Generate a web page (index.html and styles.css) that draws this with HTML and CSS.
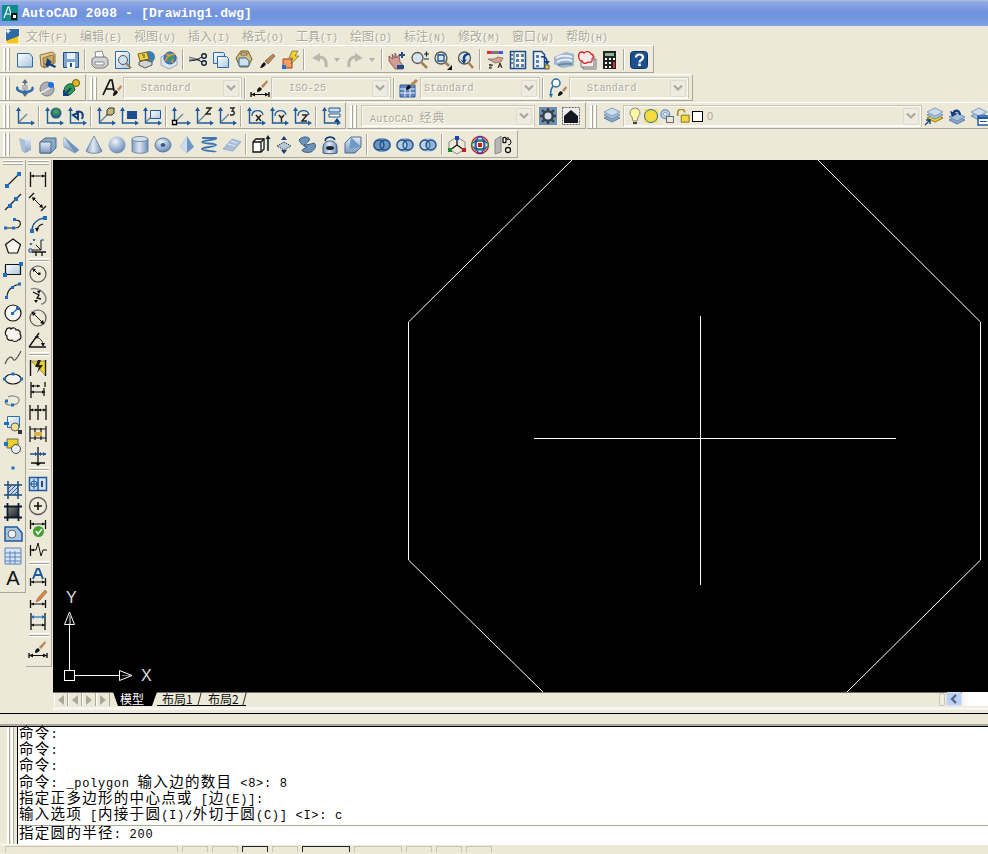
FILE: index.html
```html
<!DOCTYPE html>
<html lang="zh-CN">
<head>
<meta charset="utf-8">
<title>AutoCAD 2008 - [Drawing1.dwg]</title>
<link rel="stylesheet" href="styles.css">
</head>
<body>
<svg class="defs" aria-hidden="true">
<defs>
<linearGradient id="gp" x1="0" y1="0" x2="1" y2="1"><stop offset="0" stop-color="#fff"/><stop offset="1" stop-color="#a9c6dd"/></linearGradient>
<linearGradient id="gs" x1="0" y1="0" x2="1" y2="0"><stop offset="0" stop-color="#7e9cc0"/><stop offset=".45" stop-color="#dfe8f2"/><stop offset="1" stop-color="#6e8fb6"/></linearGradient>
<linearGradient id="gd" x1="0" y1="0" x2="0" y2="1"><stop offset="0" stop-color="#e4ecf5"/><stop offset="1" stop-color="#7d9bc0"/></linearGradient>
<radialGradient id="gb" cx=".4" cy=".3" r=".75"><stop offset="0" stop-color="#eef3f9"/><stop offset="1" stop-color="#5f83b0"/></radialGradient>
<radialGradient id="gg" cx=".5" cy=".4" r=".6"><stop offset="0" stop-color="#50b050"/><stop offset="1" stop-color="#104a90"/></radialGradient>
<linearGradient id="gk" x1="0" y1="0" x2="1" y2="1"><stop offset="0" stop-color="#8a8c70"/><stop offset="1" stop-color="#0e1a30"/></linearGradient>

<symbol id="new" viewBox="0 0 20 20"><path d="M2.500 3.500h12l3 3.500v10h-15z" fill="url(#gp)" stroke="#2b6ca6"/></symbol>
<symbol id="open" viewBox="0 0 20 20"><path d="M2 5l12-3 3 2v9l-11 5-3-2z" fill="#e4c98c" stroke="#8d7445"/><path d="M5 8l9-3 2 1-1 8-9 3z" fill="#c8a760" stroke="#8d7445"/><path d="M9 8l-1 6-2-1 4 5 1-3 6 3 1-2-6-3 2-1z" fill="#123f80"/></symbol>
<symbol id="save" viewBox="0 0 20 20"><path d="M2.500 2.500h15v15h-15z" fill="#7ea6cf" stroke="#1f4f8a"/><path d="M6 3h8v6H6z" fill="#e6eff7"/><path d="M6 12h8v6H6z" fill="#f4f4f4"/><path d="M9 13h2v4H9z" fill="#1f4f8a"/></symbol>
<symbol id="print" viewBox="0 0 20 20"><path d="M5 2l7-1 2 7H6z" fill="#fff" stroke="#888"/><path d="M2 9l3-2h11l2 3v5l-4 3H5l-3-3z" fill="#cfd2d8" stroke="#777"/><path d="M5 12h9v3H5z" fill="#fff" stroke="#888"/></symbol>
<symbol id="preview" viewBox="0 0 20 20"><path d="M2.500 1.500h12l2 2v15h-14z" fill="url(#gp)" stroke="#2b6ca6"/><circle cx="10" cy="10" r="4.500" fill="#cfe2ef" stroke="#555"/><path d="M13 13l5 5" stroke="#a08050" stroke-width="2"/></symbol>
<symbol id="publish" viewBox="0 0 20 20"><circle cx="13" cy="7" r="6" fill="#3d80b0"/><path d="M2 4l9-2 2 7-9 2z" fill="#f0d040" stroke="#7a6010"/><path d="M3 12l6-2 7 2v3l-7 3-6-3z" fill="#d4d4d4" stroke="#555"/><path d="M6 5h3M7 7h2" stroke="#444"/></symbol>
<symbol id="dwf" viewBox="0 0 20 20"><path d="M2 7l8-4 8 4v8l-8 4-8-4z" fill="#dde4ee" stroke="#9aa8bc"/><circle cx="11" cy="8" r="6" fill="#4a7fc0" stroke="#2a5a90"/><path d="M6 11c3-6 7-7 10-7M7 4c3 1 6 4 7 9" stroke="#e2a020" stroke-width="1.500" fill="none"/><path d="M9 7l4-1 1 3-4 2z" fill="#3aa040"/></symbol>
<symbol id="cut" viewBox="0 0 20 20"><path d="M1 7l11 3M1 9l11 1" stroke="#777" stroke-width="1.200" fill="none"/><circle cx="16" cy="6" r="2.300" fill="none" stroke="#123" stroke-width="1.400"/><circle cx="16" cy="13" r="2.300" fill="none" stroke="#123" stroke-width="1.400"/><path d="M14 7l-6 3-7 1M14 12l-6-3" stroke="#123" fill="none"/></symbol>
<symbol id="copy" viewBox="0 0 20 20"><path d="M2.500 2.500h10l1 1v10h-11z" fill="url(#gp)" stroke="#2b6ca6"/><path d="M6.500 6.500h9l2 2v9h-11z" fill="url(#gp)" stroke="#2b6ca6"/></symbol>
<symbol id="paste" viewBox="0 0 20 20"><path d="M2 8l5-7h7l4 8-4 8H6z" fill="#d8bd7c" stroke="#6f5a2c"/><path d="M5 8h7l3 3v5H5z" fill="#cfe0ee" stroke="#2b6ca6"/><path d="M7 3h6v2H7z" fill="#fff" stroke="#6f5a2c"/></symbol>
<symbol id="brush" viewBox="0 0 20 20"><path d="M3 18c1-3 3-5 4-6l2 2c-1 2-3 4-6 4z" fill="#111"/><path d="M8 11l8-7 2 2-7 8z" fill="#b98958" stroke="#6b4a28" stroke-width=".6"/></symbol>
<symbol id="match" viewBox="0 0 20 20"><path d="M3 9h9v9H3z" fill="#f0a060" stroke="#b03020"/><path d="M2 15h4v4H2z" fill="#2070d0"/><path d="M12 1l6 0-3 5h4l-8 8 2-6h-4z" fill="#f4d020" stroke="#555" stroke-width=".6"/></symbol>
<symbol id="undo" viewBox="0 0 20 20"><path d="M16 17c1-7-2-10-7-10" stroke="#bab8ac" stroke-width="3" fill="none"/><path d="M2 8l8-5v9z" fill="#bab8ac"/></symbol>
<symbol id="redo" viewBox="0 0 20 20"><path d="M4 17c-1-7 2-10 7-10" stroke="#bab8ac" stroke-width="3" fill="none"/><path d="M18 8l-8-5v9z" fill="#bab8ac"/></symbol>
<symbol id="pan" viewBox="0 0 20 20"><path d="M2 6l4 3-1-5 3 4 0-5 2 5 2-3 1 7 2 2 1 5H8l-6-8z" fill="#d49c92" stroke="#6a3a3a" stroke-width=".7"/><path d="M14 2h2v2h2v2h-2v2h-2V6h-2V4h2z" fill="#1f4f8a"/><path d="M10 15h7v4h-7z" fill="#1f4f8a"/></symbol>
<symbol id="zoomrt" viewBox="0 0 20 20"><circle cx="7.500" cy="8" r="5.500" fill="#d6e4ee" stroke="#555" stroke-width="1.300"/><path d="M11 12l6 6" stroke="#a88050" stroke-width="2.500"/><path d="M14 4h5M16.500 1.500v5M14 9h5" stroke="#123" stroke-width="1.200"/></symbol>
<symbol id="zoomwin" viewBox="0 0 20 20"><circle cx="8" cy="8" r="6" fill="#d6e4ee" stroke="#555" stroke-width="1.300"/><path d="M5 5h6v6H5z" fill="none" stroke="#1f4f8a" stroke-width="1.300"/><path d="M12 12l4 4" stroke="#a88050" stroke-width="2.500"/><path d="M19 15v5h-5z" fill="#111"/></symbol>
<symbol id="zoomprev" viewBox="0 0 20 20"><circle cx="8.500" cy="8" r="6" fill="#d6e4ee" stroke="#555" stroke-width="1.300"/><path d="M12 12l5 6" stroke="#a88050" stroke-width="2.500"/><path d="M13 3C8 3 6 6 7 11l-3-2 4 5 3-5-2 1c0-3 1-5 5-5z" fill="#123f80"/></symbol>
<symbol id="props" viewBox="0 0 20 20"><path d="M2 1h16v3H2z" fill="#d040c0"/><path d="M2 1h4v3H2z" fill="#e03030"/><path d="M9 1h3v3H9z" fill="#30b040"/><path d="M14 1h4v3h-4z" fill="#3060e0"/><path d="M3 9h6l4-2 5 1-2 4-6 1z" fill="#d8a090" stroke="#555" stroke-width=".6"/><path d="M4 15h4M4 15c2-1 4 1 0 3h3M13 18l2-5 2 5M14 16h2" stroke="#222" fill="none"/></symbol>
<symbol id="design" viewBox="0 0 20 20"><path d="M2.500 1.500h15v17h-15z" fill="#f4f4ee" stroke="#1f4f8a" stroke-width="1.500"/><path d="M6 1v18" stroke="#1f4f8a"/><path d="M3 4h2v2H3zM3 8h2v2H3zM3 12h2v2H3zM8 4h3v3H8zM13 4h3v3h-3zM8 9h3v3H8zM13 9h3v3h-3zM8 14h3v3H8zM13 14h3v3h-3z" fill="#5a80a8"/></symbol>
<symbol id="palette" viewBox="0 0 20 20"><path d="M2.500 1.500h8l3 3v14h-11z" fill="#eef2f6" stroke="#1f4f8a" stroke-width="1.500"/><path d="M5 5h3v3H5zM5 10h3v3H5zM5 15h3v2H5z" fill="#5a80a8"/><path d="M10 7c4-1 6 1 6 5" stroke="#123f80" stroke-width="1.500" fill="none"/><path d="M13 11h6l-3 4z" fill="#123f80"/><path d="M14 15h4v4h-4z" fill="#f0d040" stroke="#555"/></symbol>
<symbol id="sheet" viewBox="0 0 20 20"><path d="M0 7l12-5 8 2v12l-12 2-8-4z" fill="#9cb6cc"/><path d="M2 8c5-3 10-3 16-1M3 12c5-3 10-3 15-1" stroke="#eef" stroke-width="2" fill="none"/><path d="M4 15c4-1 8-2 14-1" stroke="#6d8aa6" stroke-width="2" fill="none"/></symbol>
<symbol id="markup" viewBox="0 0 20 20"><path d="M6 9h13v10H6z" fill="#ddd" stroke="#777"/><path d="M4 6h13v11H4z" fill="#eee" stroke="#777"/><path d="M2 4c1-3 4-2 5-1 2-2 6-2 7 1 3 0 3 4 1 5 1 3-2 4-4 3-2 2-5 2-6-1-3 0-4-4-3-7z" fill="#fbeaea" stroke="#d02020" stroke-width="1.300"/></symbol>
<symbol id="calc" viewBox="0 0 20 20"><path d="M3 1h13v18H3z" fill="#222"/><path d="M5 3h9v3H5z" fill="#8db48d"/><path d="M5 8h2v2H5zM9 8h2v2H9zM13 8h2v2h-2zM5 12h2v2H5zM9 12h2v2H9zM5 16h2v2H5zM9 16h2v2H9z" fill="#fff"/><path d="M13 12h2v6h-2z" fill="#e03030"/></symbol>
<symbol id="help" viewBox="0 0 20 20"><rect x="1.500" y="1.500" width="17" height="17" rx="3" fill="#1d508e" stroke="#0e3260"/><path d="M7 7.500c0-4 7-4 7 0 0 2.500-3.500 2.500-3.500 5" stroke="#fff" stroke-width="2.200" fill="none"/><path d="M9.200 13.500h2.600v2.600H9.200z" fill="#fff"/></symbol>

<symbol id="orbit1" viewBox="0 0 20 20"><path d="M10 2v16" stroke="#5a6a80" stroke-width="1.500"/><path d="M10 1l-3 4h6zM10 19l-3-4h6z" fill="#5a6a80"/><path d="M3 9c-3 3 2 5 7 5s9-2 7-5" fill="none" stroke="#2f6cb0" stroke-width="2.500"/><path d="M7 7h6v5H7z" fill="#b8b8b8"/></symbol>
<symbol id="orbit2" viewBox="0 0 20 20"><circle cx="9" cy="11" r="7" fill="#aeb0b4" stroke="#777"/><path d="M2 15C6 14 14 9 18 3" stroke="#eee" stroke-width="1.500" fill="none"/><circle cx="13" cy="7" r="3" fill="#1f70d8"/></symbol>
<symbol id="orbit3" viewBox="0 0 20 20"><path d="M3 14c0-7 4-9 9-8l2 6-5 5z" fill="#2f9a50" stroke="#14603a"/><circle cx="15" cy="5" r="3.500" fill="#e0b820" stroke="#6a5a10"/><path d="M10 10l-7 7M3 12v5h5" stroke="#123f80" stroke-width="2" fill="none"/></symbol>
<symbol id="textstyle" viewBox="0 0 20 20"><path d="M1 17L8 2h2l2 11M4 11h8" stroke="#111" stroke-width="1.700" fill="none"/><path d="M11 18c0-3 1-5 3-6l2 2c-1 2-3 4-5 4z" fill="#111"/><path d="M15 11l4-4 1 2-3 4z" fill="#b98958"/></symbol>
<symbol id="dimstyle" viewBox="0 0 20 20"><path d="M1 14v5M19 14v5" stroke="#111" stroke-width="1.400"/><path d="M1 16.500h18" stroke="#111"/><path d="M1 16.500l4-2v4zM19 16.500l-4-2v4z" fill="#111"/><path d="M7 14c0-3 1-4 3-5l2 2c-1 2-3 3-5 3z" fill="#111"/><path d="M11 8l6-6 1 2-5 6z" fill="#b98958"/></symbol>
<symbol id="tablestyle" viewBox="0 0 20 20"><path d="M1 7h15v12H1z" fill="#5f87c4" stroke="#2b5a9c"/><path d="M1 11h15M1 15h15M6 11v8M11 11v8" stroke="#e8eef8"/><path d="M7 12c0-3 1-4 3-5l2 2c-1 2-3 3-5 3z" fill="#111"/><path d="M11 6l6-5 2 2-5 5z" fill="#b98958"/></symbol>
<symbol id="mlstyle" viewBox="0 0 20 20"><circle cx="8" cy="5" r="4" fill="#fff" stroke="#2b6ca6" stroke-width="1.500"/><path d="M5 8c-2 3-3 6-2 10" stroke="#2b6ca6" stroke-width="1.500" fill="none"/><path d="M3 20l-2-4h4z" fill="#2b6ca6"/><path d="M10 18c0-3 1-4 3-5l2 2c-1 2-3 3-5 3z" fill="#111"/><path d="M14 12l4-4 1 2-3 4z" fill="#b98958"/></symbol>
<symbol id="gear" viewBox="0 0 20 20"><path d="M1 1h18v18H1z" fill="#6d90b4"/><path d="M10 2v16M2 10h16M4 4l12 12M16 4L4 16" stroke="#3a3f48" stroke-width="2.400"/><circle cx="10" cy="10" r="6" fill="#3a3f48"/><circle cx="10" cy="10" r="3.500" fill="#d5dfe8"/></symbol>
<symbol id="workspace" viewBox="0 0 20 20"><path d="M1.500 1.500h17v17h-17z" fill="#eee" stroke="#666" stroke-dasharray="2 1"/><path d="M3 10l7-6 7 6v7H3z" fill="#151520"/></symbol>
<symbol id="layers" viewBox="0 0 20 20"><path d="M2 12l8-4 8 4-8 4z" fill="#8aa8c8" stroke="#5f7fa6"/><path d="M2 9l8-4 8 4-8 4z" fill="#a9c0d8" stroke="#6f8fb6"/><path d="M2 6l8-4 8 4-8 4z" fill="#cfdcea" stroke="#7f9fc4"/></symbol>
<symbol id="layerm" viewBox="0 0 20 20"><path d="M3 12l8-4 8 4-8 4z" fill="#f0d020" stroke="#8a7a10"/><path d="M3 9l8-4 8 4-8 4z" fill="#a9c0d8" stroke="#6f8fb6"/><path d="M3 6l8-4 8 4-8 4z" fill="#cfdcea" stroke="#7f9fc4"/><path d="M1 19l5-5M2 14h4v4" stroke="#123f80" stroke-width="1.400" fill="none"/></symbol>
<symbol id="layerp" viewBox="0 0 20 20"><path d="M2 14l8-4 8 4-8 4z" fill="#8aa8c8" stroke="#5f7fa6"/><path d="M2 11l8-4 8 4-8 4z" fill="#a9c0d8" stroke="#6f8fb6"/><path d="M14 9c0-6-7-7-8-3l-3-1 2 6 5-3-2-1c1-2 4-1 4 2z" fill="#123f80"/></symbol>
<symbol id="layers3" viewBox="0 0 20 20"><path d="M1 10l8-4 8 4-8 4z" fill="#a9c0d8" stroke="#6f8fb6"/><path d="M1 6l8-4 8 4-8 4z" fill="#cfdcea" stroke="#7f9fc4"/><path d="M8 10h11v9H8z" fill="#fff" stroke="#1f5a9e" stroke-width="1.500"/><path d="M8 11h11v2H8zM10 15h7v1h-7z" fill="#1f5a9e"/></symbol>
<symbol id="bulb" viewBox="0 0 14 18"><path d="M7 1a5 5 0 0 0-3 9l1 4h4l1-4a5 5 0 0 0-3-9z" fill="#fff8a0" stroke="#888"/><path d="M5 15h4v2H5z" fill="#444"/></symbol>
<symbol id="sun" viewBox="0 0 14 14"><path d="M0 0h14v14H0z" fill="#f2e36a"/><circle cx="7" cy="7" r="6.500" fill="#f5dc3a" stroke="#2f6cb0"/></symbol>
<symbol id="freeze" viewBox="0 0 16 16"><circle cx="6" cy="6" r="5" fill="#c4d4e8" stroke="#6e8fb6" stroke-width="1.500"/><circle cx="6" cy="6" r="2" fill="#fff" stroke="#6e8fb6"/><path d="M7.500 8.500h8v7h-8z" fill="#ece9d8" stroke="#456"/></symbol>
<symbol id="lock" viewBox="0 0 16 16"><path d="M2 8V4a4 4 0 0 1 8 0" fill="none" stroke="#b09020" stroke-width="2"/><path d="M6 7h9v8H6z" fill="#f2d840" stroke="#806a10"/></symbol>

<symbol id="axes" viewBox="0 0 20 20"><path d="M3.500 4v13H17" stroke="#1d5a9e" stroke-width="1.400" fill="none"/><path d="M3.500 1l-2.500 4h5zM20 17l-4-2.500v5z" fill="#1d5a9e"/></symbol>
<symbol id="ucs" viewBox="0 0 20 20"><use href="#axes" width="20" height="20"/><path d="M4 16L12 8" stroke="#6d7f90" stroke-width="1.200"/></symbol>
<symbol id="u-world" viewBox="0 0 20 20"><use href="#axes" width="20" height="20"/><circle cx="12" cy="7" r="5.500" fill="url(#gg)"/></symbol>
<symbol id="u-prev" viewBox="0 0 20 20"><use href="#axes" width="20" height="20"/><path d="M9 6c6-2 8 2 6 7M6 9l5-2v6z" fill="none" stroke="#123f80" stroke-width="2"/></symbol>
<symbol id="u-face" viewBox="0 0 20 20"><use href="#ucs" width="20" height="20"/><path d="M11 4l2-2h5v5l-2 2h-5z" fill="#c8b878" stroke="#333"/></symbol>
<symbol id="u-obj" viewBox="0 0 20 20"><use href="#axes" width="20" height="20"/><path d="M8 5h10v8H8z" fill="#1d4f8e"/></symbol>
<symbol id="u-view" viewBox="0 0 20 20"><use href="#ucs" width="20" height="20"/><path d="M8.500 4.500h10v8h-10z" fill="url(#gp)" stroke="#1d5a9e"/></symbol>
<symbol id="u-origin" viewBox="0 0 20 20"><use href="#ucs" width="20" height="20"/><path d="M1.500 14.500h4v4h-4z" fill="#fff" stroke="#000" stroke-width="1.300"/></symbol>
<symbol id="u-z" viewBox="0 0 20 20"><use href="#ucs" width="20" height="20"/><path d="M12 2h5l-5 6h5" stroke="#222" stroke-width="1.400" fill="none"/></symbol>
<symbol id="u-3" viewBox="0 0 20 20"><use href="#ucs" width="20" height="20"/><path d="M13 2h4l-2 3c3 0 3 4 0 4h-2" stroke="#222" stroke-width="1.300" fill="none"/></symbol>
<symbol id="u-x" viewBox="0 0 20 20"><use href="#axes" width="20" height="20"/><path d="M6 10c0-7 10-7 11-1" stroke="#1d5a9e" stroke-width="1.300" fill="none"/><path d="M10 9l5 6M15 9l-5 6" stroke="#222" stroke-width="1.500"/></symbol>
<symbol id="u-y" viewBox="0 0 20 20"><use href="#axes" width="20" height="20"/><path d="M6 10c0-7 10-7 11-1" stroke="#1d5a9e" stroke-width="1.300" fill="none"/><path d="M10 9l2.500 3 2.500-3M12.500 12v4" stroke="#222" stroke-width="1.500" fill="none"/></symbol>
<symbol id="u-zz" viewBox="0 0 20 20"><use href="#axes" width="20" height="20"/><path d="M6 10c0-7 10-7 11-1" stroke="#1d5a9e" stroke-width="1.300" fill="none"/><path d="M10 9h5l-5 6h5" stroke="#222" stroke-width="1.500" fill="none"/></symbol>
<symbol id="u-mgr" viewBox="0 0 20 20"><use href="#axes" width="20" height="20"/><path d="M8 2h11v4H8z" fill="#cfdcea" stroke="#1d5a9e"/><path d="M8 8h11v3H8z" fill="#fff" stroke="#1d5a9e"/><path d="M13 16l3-4 3 4z" fill="#123f80"/></symbol>

<symbol id="s-poly" viewBox="0 0 20 20"><path d="M4 3l6 1 6-1v12l-6 3-3-2z" fill="url(#gd)"/><path d="M4 3l6 2v13l-3-2z" fill="#a9c0d8"/></symbol>
<symbol id="s-box" viewBox="0 0 20 20"><path d="M2 7l5-4h11v10l-5 5H2z" fill="#8aa8c8" stroke="#4f6d90"/><path d="M2 7h11v11H2z" fill="url(#gd)" stroke="#4f6d90"/></symbol>
<symbol id="s-wedge" viewBox="0 0 20 20"><path d="M3 2l15 13-4 3-11-6z" fill="#6e8fb6" stroke="#8ea5bf"/><path d="M3 2v10l11 6z" fill="url(#gd)"/></symbol>
<symbol id="s-cone" viewBox="0 0 20 20"><path d="M10 1l8 15c-3 3-13 3-16 0z" fill="url(#gs)" stroke="#5a7aa0" stroke-width=".8"/></symbol>
<symbol id="s-sphere" viewBox="0 0 20 20"><circle cx="10" cy="10" r="8.500" fill="url(#gb)"/></symbol>
<symbol id="s-cyl" viewBox="0 0 20 20"><path d="M2 4v12c0 3 16 3 16 0V4z" fill="url(#gs)" stroke="#5a7aa0" stroke-width=".8"/><ellipse cx="10" cy="4" rx="8" ry="2.500" fill="#d5e0ec" stroke="#5a7aa0" stroke-width=".8"/></symbol>
<symbol id="s-torus" viewBox="0 0 20 20"><ellipse cx="10" cy="10" rx="8" ry="7" fill="url(#gb)" stroke="#5a7aa0"/><ellipse cx="10" cy="10" rx="2.500" ry="2" fill="#3a5c86"/></symbol>
<symbol id="s-pyr" viewBox="0 0 20 20"><path d="M11 1l7 11-7 6-7-6z" fill="#6e9ac8"/><path d="M11 1v17l-7-6z" fill="#cddcec"/></symbol>
<symbol id="s-helix" viewBox="0 0 20 20"><path d="M3 3h14c2 2-14 2-14 4s14 1 14 3-14 2-14 4 14 2 14 3" stroke="#3d78b0" stroke-width="1.800" fill="none"/></symbol>
<symbol id="s-plane" viewBox="0 0 20 20"><path d="M1 14l9-10 9 3-8 9z" fill="#a9c0d8" stroke="#9ab0c6"/><path d="M6 9l7 2M9 6l6 2" stroke="#e8eef6"/></symbol>
<symbol id="s-extr" viewBox="0 0 20 20"><path d="M2 7l3-3h8v10l-3 3H2z" fill="#fff" stroke="#111" stroke-width="1.300"/><path d="M2 7h8v10M10 7l3-3" fill="none" stroke="#111" stroke-width="1.300"/><path d="M17 2v14" stroke="#123" stroke-width="1.600"/><path d="M17 0l-2.500 4h5z" fill="#123"/></symbol>
<symbol id="s-press" viewBox="0 0 20 20"><path d="M10 1l-3 4h6zM10 19l-3-4h6z" fill="#1d3f70"/><path d="M3 11l7-4 7 4-7 4z" fill="#b8c8dc" stroke="#334" stroke-dasharray="1.500 1"/></symbol>
<symbol id="s-sweep" viewBox="0 0 20 20"><path d="M2 5c2-3 7-4 10-2 2 2-2 5-5 7 3 0 7-1 10-2 3 2 1 7-3 9-4 1-9 0-9-2l5-3c-3 0-6-3-8-7z" fill="#6d93ba" stroke="#3a5a82"/></symbol>
<symbol id="s-rev" viewBox="0 0 20 20"><path d="M3 13c0-5 3-7 7-7s7 2 7 7v5c-3 1-11 1-14 0z" fill="url(#gs)" stroke="#3a5a82"/><ellipse cx="10" cy="13" rx="4" ry="2" fill="#223"/><path d="M5 6C6 1 13 1 15 5" fill="none" stroke="#123f80" stroke-width="1.600"/></symbol>
<symbol id="s-loft" viewBox="0 0 20 20"><path d="M2 8l6-6h10v10l-6 6H2z" fill="url(#gd)" stroke="#4f6d90"/><path d="M8 2l-2 12 12-2z" fill="#6e9ac8"/></symbol>
<symbol id="s-union" viewBox="0 0 20 20"><ellipse cx="10" cy="10" rx="9" ry="7" fill="#6e97c0"/><circle cx="7" cy="10" r="5" fill="none" stroke="#1d4f8e" stroke-width="1.300"/><circle cx="13" cy="10" r="5" fill="none" stroke="#1d4f8e" stroke-width="1.300"/></symbol>
<symbol id="s-sub" viewBox="0 0 20 20"><ellipse cx="10" cy="10" rx="9" ry="7" fill="#8bb0d0"/><circle cx="7" cy="10" r="5" fill="#b6cde0" stroke="#1d4f8e" stroke-width="1.300"/><circle cx="13" cy="10" r="5" fill="none" stroke="#1d4f8e" stroke-width="1.300"/></symbol>
<symbol id="s-int" viewBox="0 0 20 20"><ellipse cx="10" cy="10" rx="9" ry="7" fill="#bcd0e2"/><circle cx="7" cy="10" r="5" fill="none" stroke="#1d4f8e" stroke-width="1.300"/><circle cx="13" cy="10" r="5" fill="#6e97c0" fill-opacity=".5" stroke="#1d4f8e" stroke-width="1.300"/></symbol>
<symbol id="g-move" viewBox="0 0 20 20"><path d="M10 2l8 5v7l-8 5-8-5V7z" fill="none" stroke="#888"/><path d="M10 2v8M10 10l-7 5M10 10l7 5" stroke="#111" stroke-width="1.300"/><path d="M8 1h4v4H8z" fill="#1f40c0"/><path d="M1 13h4v4H1z" fill="#1a8a30"/><path d="M15 13h4v4h-4z" fill="#c02020"/></symbol>
<symbol id="g-rot" viewBox="0 0 20 20"><circle cx="10" cy="10" r="8.500" fill="none" stroke="#c02020" stroke-width="1.300"/><ellipse cx="10" cy="10" rx="8.500" ry="4" fill="none" stroke="#1a8a30" stroke-width="1.300"/><ellipse cx="10" cy="10" rx="4" ry="8.500" fill="none" stroke="#1f40c0" stroke-width="1.300"/><path d="M5 5h10v10H5z" fill="none" stroke="#1f40c0"/><path d="M8 8h4v4H8z" fill="#c02020"/></symbol>
<symbol id="g-ax" viewBox="0 0 20 20"><path d="M2 5l6-4v16l-6 2z" fill="#b8b8b8" stroke="#888"/><path d="M10 8V3a2 2 0 0 1 3 0v4a2 2 0 0 1-3 0z" fill="#fff" stroke="#111" stroke-width="1.300"/><circle cx="15" cy="15" r="2.500" fill="#fff" stroke="#111" stroke-width="1.300"/><path d="M15 4a3 3 0 0 1 0 6M13 3l2 2V2" fill="none" stroke="#111"/></symbol>

<symbol id="l-line" viewBox="0 0 20 20"><path d="M4 16L16 4" stroke="#222" stroke-width="1.200"/><path d="M2 14h4v4H2zM14 2h4v4h-4z" fill="#1f6fc0"/></symbol>
<symbol id="l-xline" viewBox="0 0 20 20"><path d="M2 18L18 2" stroke="#222" stroke-width="1.200"/><path d="M5 12h4v4H5zM11 5h4v4h-4z" fill="#1f6fc0"/></symbol>
<symbol id="l-pline" viewBox="0 0 20 20"><path d="M3 14h9c5 0 6-4 5-6s-4-2-5-2" fill="none" stroke="#222" stroke-width="1.200"/><path d="M1 12.500h3v3H1zM9 12.500h3v3H9zM10 4h3v3h-3z" fill="#1f6fc0"/></symbol>
<symbol id="l-poly" viewBox="0 0 20 20"><path d="M10 3l7.500 5.500-3 8.500h-9l-3-8.500z" fill="#fff" fill-opacity=".5" stroke="#111" stroke-width="1.200"/></symbol>
<symbol id="l-rect" viewBox="0 0 20 20"><path d="M2.500 5.500h15v10h-15z" fill="url(#gp)" stroke="#111" stroke-width="1.200"/><path d="M16 3h4v4h-4zM0 14h4v4H0z" fill="#1f6fc0"/></symbol>
<symbol id="l-arc" viewBox="0 0 20 20"><path d="M4 16C4 9 10 4 17 3" fill="none" stroke="#222" stroke-width="1.200"/><path d="M2 15h3v3H2zM8 5h3v3H8zM15 1.500h3v3h-3z" fill="#1f6fc0"/></symbol>
<symbol id="l-circle" viewBox="0 0 20 20"><circle cx="10" cy="10" r="8" fill="#fff" fill-opacity=".6" stroke="#111" stroke-width="1.200"/><path d="M10 10l4-4" stroke="#1f6fc0" stroke-width="1.200"/><path d="M8 9h3v3H8zM13 4h3v3h-3z" fill="#1f6fc0"/></symbol>
<symbol id="l-cloud" viewBox="0 0 20 20"><path d="M3 6c0-3 4-4 5-2 2-2 5-1 5 1 3-1 5 2 4 4 2 2 1 6-2 6-1 2-5 2-6 0-3 1-6-1-5-4-2-1-2-4-1-5z" fill="#fff" fill-opacity=".5" stroke="#111" stroke-width="1.200"/></symbol>
<symbol id="l-spline" viewBox="0 0 20 20"><path d="M2 17C5 9 9 9 10 12s4 0 8-8" fill="none" stroke="#555" stroke-width="1.200"/></symbol>
<symbol id="l-ell" viewBox="0 0 20 20"><ellipse cx="10" cy="10" rx="8" ry="5" fill="#fff" fill-opacity=".5" stroke="#111" stroke-width="1.200"/><path d="M0 8.500h3v3H0zM17 8.500h3v3h-3zM8.500 3.500h3v3h-3z" fill="#1f6fc0"/></symbol>
<symbol id="l-ellarc" viewBox="0 0 20 20"><path d="M5 6c4-2 11-1 11 3s-4 5-8 5-6-1-6-4" fill="none" stroke="#888" stroke-width="1.200"/><path d="M2 8.500h3v3H2zM8 12.500h3v3H8z" fill="#1f6fc0"/></symbol>
<symbol id="l-insert" viewBox="0 0 20 20"><path d="M4.500 2.500h12v11h-12z" fill="url(#gp)" stroke="#2b6ca6"/><circle cx="12" cy="13" r="4" fill="#f0e090" stroke="#666"/><path d="M1 8h5v3H1z" fill="#1f6fc0"/><path d="M15 16h4v4h-4z" fill="#333"/></symbol>
<symbol id="l-block" viewBox="0 0 20 20"><path d="M4 3h11v9H4z" fill="#f0d020" stroke="#666"/><circle cx="13" cy="13" r="4.500" fill="#e8eef6" stroke="#444"/><path d="M1 6h4v4H1z" fill="#1f6fc0"/></symbol>
<symbol id="l-point" viewBox="0 0 20 20"><path d="M8.500 8.500h3v3h-3z" fill="#1f6fc0"/></symbol>
<symbol id="l-hatch" viewBox="0 0 20 20"><path d="M5 5h10v10H5z" fill="#ccd4e0"/><path d="M5 9l4-4M5 13l8-8M7 15l8-8M11 15l4-4" stroke="#1f5a9e"/><path d="M1 5h18M1 15h18M5 1v18M15 1v18" stroke="#1d4a80" stroke-width="1.500"/></symbol>
<symbol id="l-grad" viewBox="0 0 20 20"><path d="M4 4h12v12H4z" fill="url(#gk)"/><path d="M1 4.500h18M1 15.500h18M4.500 1v18M15.500 1v18" stroke="#0e1a30" stroke-width="1.800"/></symbol>
<symbol id="l-region" viewBox="0 0 20 20"><path d="M2 3h12l5 6v8H2z" fill="#a9c6e0" stroke="#1f5a9e" stroke-width="1.500"/><circle cx="9" cy="10" r="4" fill="#e8eef6" stroke="#666"/></symbol>
<symbol id="l-table" viewBox="0 0 20 20"><path d="M2 2h16v3H2z" fill="#6d8fc0"/><path d="M2 2h16v16H2z" fill="#d8e4f4" stroke="#5f82b8"/><path d="M2 7h16M2 11h16M2 15h16M7 5v13M12 5v13" stroke="#5f82b8"/></symbol>

<symbol id="d-lin" viewBox="0 0 20 20"><path d="M2.500 2v15M17.500 2v15" stroke="#111" stroke-width="1.300"/><path d="M3 6h14" stroke="#111"/><path d="M3 6l3-1.500v3zM17 6l-3-1.500v3z" fill="#111"/></symbol>
<symbol id="d-ali" viewBox="0 0 20 20"><path d="M1 6l5-5M13 19l5-5" stroke="#111" stroke-width="1.300"/><path d="M5 6l9 9" stroke="#111"/><path d="M4 5l1 4 3-3zM15 16l-1-4-3 3z" fill="#111"/></symbol>
<symbol id="d-arc" viewBox="0 0 20 20"><path d="M4 16C4 10 9 5 16 4" fill="none" stroke="#1d4f8e" stroke-width="1.300"/><path d="M2 15h4v4H2zM15 2h4v4h-4z" fill="#1f6fc0"/><path d="M9 17c0-4 2-6 6-7" fill="none" stroke="#111" stroke-width="1.200"/><path d="M9 18l-2-4h4z" fill="#111"/></symbol>
<symbol id="d-ord" viewBox="0 0 20 20"><path d="M8 8l5 5V3M13 13H4" fill="none" stroke="#111"/><path d="M4 15h14M8 15v4M14 15v4" stroke="#111" stroke-width="1.300"/><path d="M13 3h3M5 2l1 2 1-2M2 6l1 2 1-2M1 12h3v3H1z" fill="none" stroke="#1d4f8e"/></symbol>
<symbol id="d-rad" viewBox="0 0 20 20"><circle cx="10" cy="10" r="8" fill="none" stroke="#555" stroke-width="1.200"/><path d="M10 10L5 5" stroke="#111"/><path d="M4 4l1.500 4 2.500-2.500z" fill="#111"/><path d="M10 8.500h2.500V11H10z" fill="#111"/></symbol>
<symbol id="d-jog" viewBox="0 0 20 20"><path d="M3 3c8-2 15 4 15 11-1 3-3 4-5 4" fill="none" stroke="#888" stroke-width="1.500"/><path d="M5 6l6 3-2 3 4 1" fill="none" stroke="#111" stroke-width="1.300"/><path d="M13 4l-4 1 2 3zM8 17l-2-3 4 0z" fill="#111"/></symbol>
<symbol id="d-dia" viewBox="0 0 20 20"><circle cx="10" cy="10" r="8" fill="none" stroke="#555" stroke-width="1.200"/><path d="M5 5l10 10" stroke="#111"/><path d="M3.500 3.500l1.500 4.500 3-3zM16.500 16.500l-1.500-4.500-3 3z" fill="#111"/></symbol>
<symbol id="d-ang" viewBox="0 0 20 20"><path d="M1 17h17M1 17L11 3" fill="none" stroke="#111" stroke-width="1.300"/><path d="M8 7c4 1 7 4 7 8" fill="none" stroke="#333"/><path d="M15 17l-2-4h4zM7 6l4 0-2 3z" fill="#111"/></symbol>
<symbol id="d-quick" viewBox="0 0 20 20"><path d="M2.500 2v16M17.500 2v16" stroke="#111" stroke-width="1.400"/><path d="M3 3l14 14V3z" fill="#f0d020" stroke="#665" stroke-width=".6"/><path d="M10 2l-3 7h4l-2 6 6-8h-4l2-5z" fill="#222"/></symbol>
<symbol id="d-base" viewBox="0 0 20 20"><path d="M3 2v16M16 8v8M17 2v5" stroke="#111" stroke-width="1.300"/><path d="M3 6h9M3 12h14" stroke="#111"/><path d="M3 6l3-1.500v3zM12 6l-3-1.500v3zM3 12l3-1.500v3zM17 12l-3-1.500v3z" fill="#111"/></symbol>
<symbol id="d-cont" viewBox="0 0 20 20"><path d="M2 3v15M10 3v15M18 3v15" stroke="#111" stroke-width="1.300"/><path d="M2 8h16" stroke="#111"/><path d="M2 8l3-1.500v3zM10 8l-3-1.500v3zM10 8l3-1.500v3zM18 8l-3-1.500v3z" fill="#111"/></symbol>
<symbol id="d-space" viewBox="0 0 20 20"><path d="M2 2v16M18 2v16M7 4v12M13 4v12" stroke="#111" stroke-width="1.200"/><path d="M2 5h16M2 14h16" stroke="#111"/><path d="M6 8h8v4H6z" fill="#d8b040"/></symbol>
<symbol id="d-break" viewBox="0 0 20 20"><path d="M10 1v16M3 17h14" stroke="#111" stroke-width="1.300"/><path d="M2 8h5M13 8h5" stroke="#1d4f8e" stroke-width="1.300"/><path d="M10 8l-3-2v4zM10 8l3-2v4zM18 8l-3-2v4z" fill="#1d4f8e"/><path d="M7 17l3 3 3-3z" fill="#111"/></symbol>
<symbol id="d-tol" viewBox="0 0 20 20"><path d="M1.500 3.500h17v13h-17z" fill="#cfe0f0" stroke="#1d5a9e" stroke-width="1.500"/><path d="M10 4v12" stroke="#1d5a9e" stroke-width="1.500"/><circle cx="6" cy="10" r="3" fill="none" stroke="#1d5a9e"/><path d="M6 5v10M1 10h9" stroke="#1d5a9e"/><path d="M14 7v6" stroke="#123" stroke-width="1.600"/></symbol>
<symbol id="d-cen" viewBox="0 0 20 20"><circle cx="10" cy="10" r="8.500" fill="none" stroke="#555" stroke-width="1.300"/><path d="M6 10h8M10 6v8" stroke="#111" stroke-width="1.600"/></symbol>
<symbol id="d-insp" viewBox="0 0 20 20"><path d="M2.500 2v9M17.500 2v9" stroke="#111" stroke-width="1.300"/><path d="M3 6h14" stroke="#111"/><path d="M3 6l3-1.500v3zM17 6l-3-1.500v3z" fill="#111"/><circle cx="10.500" cy="13.500" r="5.500" fill="#40a030"/><path d="M8 13l2 3 4-5" stroke="#fff" stroke-width="1.600" fill="none"/></symbol>
<symbol id="d-jogl" viewBox="0 0 20 20"><path d="M2.500 5v11" stroke="#111" stroke-width="1.300"/><path d="M3 10h5l2-7 3 13 2-6h4" stroke="#111" fill="none"/><path d="M3 10l3-1.500v3z" fill="#111"/></symbol>
<symbol id="d-ted" viewBox="0 0 20 20"><path d="M2.500 11v8M17.500 11v8" stroke="#111" stroke-width="1.300"/><path d="M3 15h14" stroke="#111"/><path d="M3 15l3-1.500v3zM17 15l-3-1.500v3z" fill="#111"/><path d="M5 12L9 2h2l4 10M7 8h6" fill="none" stroke="#1d5a9e" stroke-width="2"/></symbol>
<symbol id="d-ed" viewBox="0 0 20 20"><path d="M2.500 11v8M17.500 11v8" stroke="#111" stroke-width="1.300"/><path d="M3 15h14" stroke="#111"/><path d="M3 15l3-1.500v3zM17 15l-3-1.500v3z" fill="#111"/><path d="M8 13l2-4 7-8 2 2-7 8z" fill="#d89040" stroke="#844" stroke-width=".6"/></symbol>
<symbol id="d-upd" viewBox="0 0 20 20"><path d="M3 1v17M17 1v17" stroke="#111" stroke-width="1.300"/><path d="M3 5h14" stroke="#1f6fc0" stroke-width="1.200"/><path d="M3 5l3-2v4zM17 5l-3-2v4z" fill="#1f6fc0"/><path d="M3 13h14" stroke="#111"/><path d="M3 13l3-1.500v3zM17 13l-3-1.500v3z" fill="#111"/></symbol>
<symbol id="chev" viewBox="0 0 12 8"><path d="M2 1.500l4 4 4-4" fill="none" stroke="#aca899" stroke-width="2.200"/></symbol>
</defs>
</svg>

<header class="title">
  <svg class="appicon" viewBox="0 0 16 16"><path d="M0 0h16v16H0z" fill="#0f8a8a"/><path d="M2 13L6 2h1l3 11M4 9h5" fill="none" stroke="#fff" stroke-width="1.200"/><path d="M9 8h6v7H9z" fill="#111"/><path d="M11 10h3v3h-3z" fill="#fff"/></svg>
  <span class="title-text">AutoCAD 2008 - [Drawing1.dwg]</span>
</header>

<nav class="menubar">
  <svg class="docicon" viewBox="0 0 15 18"><path d="M1 2h13v15H1z" fill="#f5c518" stroke="#fff"/><path d="M1 2h13v7L1 14z" fill="#2f6aa8"/><path d="M3 1l1 2 2 1-2 1-1 2-1-2-2-1 2-1z" fill="#fff"/></svg>
  <span class="menu-item">文件<span class="key">(F)</span></span>
  <span class="menu-item">编辑<span class="key">(E)</span></span>
  <span class="menu-item">视图<span class="key">(V)</span></span>
  <span class="menu-item">插入<span class="key">(I)</span></span>
  <span class="menu-item">格式<span class="key">(O)</span></span>
  <span class="menu-item">工具<span class="key">(T)</span></span>
  <span class="menu-item">绘图<span class="key">(D)</span></span>
  <span class="menu-item">标注<span class="key">(N)</span></span>
  <span class="menu-item">修改<span class="key">(M)</span></span>
  <span class="menu-item">窗口<span class="key">(W)</span></span>
  <span class="menu-item">帮助<span class="key">(H)</span></span>
</nav>

<section class="row row-tall">
  <div class="bar">
    <i class="grip"></i>
    <span class="btn"><svg class="ic"><use href="#new"/></svg></span><span class="btn"><svg class="ic"><use href="#open"/></svg></span><span class="btn"><svg class="ic"><use href="#save"/></svg></span>
    <i class="sep"></i>
    <span class="btn"><svg class="ic"><use href="#print"/></svg></span><span class="btn"><svg class="ic"><use href="#preview"/></svg></span><span class="btn"><svg class="ic"><use href="#publish"/></svg></span><span class="btn"><svg class="ic"><use href="#dwf"/></svg></span>
    <i class="sep"></i>
    <span class="btn"><svg class="ic"><use href="#cut"/></svg></span><span class="btn"><svg class="ic"><use href="#copy"/></svg></span><span class="btn"><svg class="ic"><use href="#paste"/></svg></span><span class="btn"><svg class="ic"><use href="#brush"/></svg></span><span class="btn"><svg class="ic"><use href="#match"/></svg></span>
    <i class="sep"></i>
    <span class="split"><svg class="ic"><use href="#undo"/></svg><i class="caret"></i></span><span class="split split-redo"><svg class="ic"><use href="#redo"/></svg><i class="caret"></i></span>
    <i class="sep"></i>
    <span class="btn"><svg class="ic"><use href="#pan"/></svg></span><span class="btn"><svg class="ic"><use href="#zoomrt"/></svg></span><span class="btn"><svg class="ic"><use href="#zoomwin"/></svg></span><span class="btn"><svg class="ic"><use href="#zoomprev"/></svg></span>
    <i class="sep"></i>
    <span class="btn"><svg class="ic"><use href="#props"/></svg></span><span class="btn"><svg class="ic"><use href="#design"/></svg></span><span class="btn"><svg class="ic"><use href="#palette"/></svg></span><span class="btn"><svg class="ic"><use href="#sheet"/></svg></span><span class="btn"><svg class="ic"><use href="#markup"/></svg></span><span class="btn"><svg class="ic"><use href="#calc"/></svg></span>
    <i class="sep"></i>
    <span class="btn"><svg class="ic"><use href="#help"/></svg></span>
  </div>
</section>

<section class="row">
  <div class="bar">
    <i class="grip"></i>
    <span class="btn"><svg class="ic"><use href="#orbit1"/></svg></span><span class="btn"><svg class="ic"><use href="#orbit2"/></svg></span><span class="btn"><svg class="ic"><use href="#orbit3"/></svg></span>
  </div>
  <div class="bar">
    <i class="grip"></i>
    <span class="btn"><svg class="ic"><use href="#textstyle"/></svg></span>
    <div class="combo w119"><span class="combo-text">Standard</span><span class="drop"><svg class="chev"><use href="#chev"/></svg></span></div>
    <i class="sep"></i>
    <span class="btn"><svg class="ic"><use href="#dimstyle"/></svg></span>
    <div class="combo w120"><span class="combo-text">ISO-25</span><span class="drop"><svg class="chev"><use href="#chev"/></svg></span></div>
    <i class="sep"></i>
    <span class="btn"><svg class="ic"><use href="#tablestyle"/></svg></span>
    <div class="combo w120"><span class="combo-text near">Standard</span><span class="drop"><svg class="chev"><use href="#chev"/></svg></span></div>
    <i class="sep"></i>
    <span class="btn"><svg class="ic"><use href="#mlstyle"/></svg></span>
    <div class="combo w120"><span class="combo-text">Standard</span><span class="drop"><svg class="chev"><use href="#chev"/></svg></span></div>
  </div>
</section>

<section class="row">
  <div class="bar">
    <i class="grip"></i>
    <span class="btn"><svg class="ic"><use href="#ucs"/></svg></span>
    <i class="sep"></i>
    <span class="btn"><svg class="ic"><use href="#u-world"/></svg></span><span class="btn"><svg class="ic"><use href="#u-prev"/></svg></span>
    <i class="sep"></i>
    <span class="btn"><svg class="ic"><use href="#u-face"/></svg></span><span class="btn"><svg class="ic"><use href="#u-obj"/></svg></span><span class="btn"><svg class="ic"><use href="#u-view"/></svg></span>
    <i class="sep"></i>
    <span class="btn"><svg class="ic"><use href="#u-origin"/></svg></span><span class="btn"><svg class="ic"><use href="#u-z"/></svg></span><span class="btn"><svg class="ic"><use href="#u-3"/></svg></span>
    <i class="sep"></i>
    <span class="btn"><svg class="ic"><use href="#u-x"/></svg></span><span class="btn"><svg class="ic"><use href="#u-y"/></svg></span><span class="btn"><svg class="ic"><use href="#u-zz"/></svg></span>
    <i class="sep"></i>
    <span class="btn"><svg class="ic"><use href="#u-mgr"/></svg></span>
  </div>
  <div class="bar">
    <i class="grip"></i>
    <div class="combo w174 gap-l"><span class="combo-text mid">AutoCAD <span class="zh-combo">经典</span></span><span class="drop"><svg class="chev"><use href="#chev"/></svg></span></div>
    <span class="btn"><svg class="ic"><use href="#gear"/></svg></span><span class="btn"><svg class="ic"><use href="#workspace"/></svg></span>
  </div>
  <div class="bar bar-fill">
    <i class="grip"></i>
    <span class="btn"><svg class="ic"><use href="#layers"/></svg></span>
    <div class="combo w299">
      <span class="layer-state">
        <svg class="st st-bulb"><use href="#bulb"/></svg><svg class="st"><use href="#sun"/></svg><svg class="st"><use href="#freeze"/></svg><svg class="st"><use href="#lock"/></svg><i class="swatch"></i><span class="layer-name">0</span>
      </span>
      <span class="drop"><svg class="chev"><use href="#chev"/></svg></span>
    </div>
    <span class="btn"><svg class="ic"><use href="#layerm"/></svg></span><span class="btn"><svg class="ic"><use href="#layerp"/></svg></span><span class="btn"><svg class="ic"><use href="#layers3"/></svg></span>
  </div>
</section>

<section class="row row-tall row-last">
  <div class="bar">
    <i class="grip"></i>
    <span class="btn"><svg class="ic"><use href="#s-poly"/></svg></span><span class="btn"><svg class="ic"><use href="#s-box"/></svg></span><span class="btn"><svg class="ic"><use href="#s-wedge"/></svg></span><span class="btn"><svg class="ic"><use href="#s-cone"/></svg></span><span class="btn"><svg class="ic"><use href="#s-sphere"/></svg></span><span class="btn"><svg class="ic"><use href="#s-cyl"/></svg></span><span class="btn"><svg class="ic"><use href="#s-torus"/></svg></span><span class="btn"><svg class="ic"><use href="#s-pyr"/></svg></span><span class="btn"><svg class="ic"><use href="#s-helix"/></svg></span><span class="btn"><svg class="ic"><use href="#s-plane"/></svg></span>
    <i class="sep"></i>
    <span class="btn"><svg class="ic"><use href="#s-extr"/></svg></span><span class="btn"><svg class="ic"><use href="#s-press"/></svg></span><span class="btn"><svg class="ic"><use href="#s-sweep"/></svg></span><span class="btn"><svg class="ic"><use href="#s-rev"/></svg></span><span class="btn"><svg class="ic"><use href="#s-loft"/></svg></span>
    <i class="sep"></i>
    <span class="btn"><svg class="ic"><use href="#s-union"/></svg></span><span class="btn"><svg class="ic"><use href="#s-sub"/></svg></span><span class="btn"><svg class="ic"><use href="#s-int"/></svg></span>
    <i class="sep"></i>
    <span class="btn"><svg class="ic"><use href="#g-move"/></svg></span><span class="btn"><svg class="ic"><use href="#g-rot"/></svg></span><span class="btn"><svg class="ic"><use href="#g-ax"/></svg></span>
  </div>
</section>

<main class="workspace">
  <div class="docks">
    <div class="vbar vbar-draw">
      <i class="vgrip"></i>
      <span class="vbtn"><svg class="ic"><use href="#l-line"/></svg></span><span class="vbtn"><svg class="ic"><use href="#l-xline"/></svg></span><span class="vbtn"><svg class="ic"><use href="#l-pline"/></svg></span><span class="vbtn"><svg class="ic"><use href="#l-poly"/></svg></span><span class="vbtn"><svg class="ic"><use href="#l-rect"/></svg></span><span class="vbtn"><svg class="ic"><use href="#l-arc"/></svg></span><span class="vbtn"><svg class="ic"><use href="#l-circle"/></svg></span><span class="vbtn"><svg class="ic"><use href="#l-cloud"/></svg></span><span class="vbtn"><svg class="ic"><use href="#l-spline"/></svg></span><span class="vbtn"><svg class="ic"><use href="#l-ell"/></svg></span><span class="vbtn"><svg class="ic"><use href="#l-ellarc"/></svg></span><span class="vbtn"><svg class="ic"><use href="#l-insert"/></svg></span><span class="vbtn"><svg class="ic"><use href="#l-block"/></svg></span><span class="vbtn"><svg class="ic"><use href="#l-point"/></svg></span><span class="vbtn"><svg class="ic"><use href="#l-hatch"/></svg></span><span class="vbtn"><svg class="ic"><use href="#l-grad"/></svg></span><span class="vbtn"><svg class="ic"><use href="#l-region"/></svg></span><span class="vbtn"><svg class="ic"><use href="#l-table"/></svg></span><span class="vbtn vbtn-a">A</span>
    </div>
    <div class="vbar vbar-dim">
      <i class="vgrip"></i>
      <span class="vbtn"><svg class="ic"><use href="#d-lin"/></svg></span><span class="vbtn"><svg class="ic"><use href="#d-ali"/></svg></span><span class="vbtn"><svg class="ic"><use href="#d-arc"/></svg></span><span class="vbtn"><svg class="ic"><use href="#d-ord"/></svg></span>
      <i class="hsep"></i>
      <span class="vbtn"><svg class="ic"><use href="#d-rad"/></svg></span><span class="vbtn"><svg class="ic"><use href="#d-jog"/></svg></span><span class="vbtn"><svg class="ic"><use href="#d-dia"/></svg></span><span class="vbtn"><svg class="ic"><use href="#d-ang"/></svg></span>
      <i class="hsep"></i>
      <span class="vbtn"><svg class="ic"><use href="#d-quick"/></svg></span><span class="vbtn"><svg class="ic"><use href="#d-base"/></svg></span><span class="vbtn"><svg class="ic"><use href="#d-cont"/></svg></span><span class="vbtn"><svg class="ic"><use href="#d-space"/></svg></span><span class="vbtn"><svg class="ic"><use href="#d-break"/></svg></span>
      <i class="hsep"></i>
      <span class="vbtn"><svg class="ic"><use href="#d-tol"/></svg></span><span class="vbtn"><svg class="ic"><use href="#d-cen"/></svg></span><span class="vbtn"><svg class="ic"><use href="#d-insp"/></svg></span><span class="vbtn"><svg class="ic"><use href="#d-jogl"/></svg></span>
      <i class="hsep"></i>
      <span class="vbtn"><svg class="ic"><use href="#d-ted"/></svg></span><span class="vbtn"><svg class="ic"><use href="#d-ed"/></svg></span><span class="vbtn"><svg class="ic"><use href="#d-upd"/></svg></span>
      <i class="hsep"></i>
      <span class="vbtn"><svg class="ic"><use href="#dimstyle"/></svg></span>
    </div>
  </div>
  <div class="viewport">
    <svg class="drawing" viewBox="53 160 935 532">
      <g class="wire">
        <polyline points="572,160 408.500,322 408.500,560 543,692"/>
        <polyline points="818,160 980.500,322 980.500,560 847,692"/>
        <line x1="700.500" y1="316" x2="700.500" y2="585"/>
        <line x1="534" y1="438.500" x2="896" y2="438.500"/>
        <rect x="64.500" y="670.500" width="10" height="10"/>
        <line x1="69.500" y1="670" x2="69.500" y2="625"/>
        <line x1="75" y1="675.500" x2="120" y2="675.500"/>
        <polygon points="69.500,612 64.500,624.500 74.500,624.500"/>
        <polygon points="132,675.500 119.500,670.500 119.500,680.500"/>
      </g>
      <path class="ucs-fill" d="M69 615h2v9h-2zM122 675h8v1h-8z"/>
      <text class="ucs-label" x="66" y="603">Y</text>
      <text class="ucs-label" x="141" y="681">X</text>
    </svg>
    <div class="tabstrip">
      <div class="nav"><span class="nav-btn"><i class="nav-first"></i></span><span class="nav-btn"><i class="nav-prev"></i></span><span class="nav-btn"><i class="nav-next"></i></span><span class="nav-btn"><i class="nav-last"></i></span></div>
      <span class="tab tab-active">模型</span>
      <span class="tab tab-1">布局1</span>
      <span class="tab tab-2">布局2</span>
      <div class="hscroll"><i class="hgrip"></i><span class="harrow"><svg viewBox="0 0 10 10"><path d="M7 1L3 5l4 4" fill="none" stroke="#4d6185" stroke-width="2.200"/></svg></span><i class="htrack"></i></div>
    </div>
  </div>
</main>

<section class="cmd-area">
  <div class="cmd-head"></div>
  <div class="cmd-body">
    <i class="cmd-grip"></i>
    <div class="cmd-box">
      <div class="cmd-history">
        <div class="cmd-line"><span class="zh">命令</span>:</div>
        <div class="cmd-line"><span class="zh">命令</span>:</div>
        <div class="cmd-line"><span class="zh">命令</span>:</div>
        <div class="cmd-line"><span class="zh">命令</span>: _polygon <span class="zh">输入边的数目</span> &lt;8&gt;: 8</div>
        <div class="cmd-line"><span class="zh">指定正多边形的中心点或</span> [<span class="zh">边</span>(E)]:</div>
        <div class="cmd-line"><span class="zh">输入选项</span> [<span class="zh">内接于圆</span>(I)/<span class="zh">外切于圆</span>(C)] &lt;I&gt;: c</div>
      </div>
      <div class="cmd-input"><span class="zh">指定圆的半径</span>: 200</div>
    </div>
  </div>
</section>

<footer class="status">
  <i class="st-cell st-coords"></i><i class="st-cell st-26"></i><i class="st-cell st-26"></i><i class="st-cell st-26 on"></i><i class="st-cell st-26"></i><i class="st-cell st-48 on"></i><i class="st-cell st-48"></i><i class="st-cell st-26"></i><i class="st-cell st-26"></i><i class="st-cell st-26"></i>
</footer>
</body>
</html>
```

FILE: styles.css
```css
* { box-sizing: border-box; }
html, body { margin: 0; padding: 0; }
body {
  width: 988px;
  height: 854px;
  overflow: hidden;
  background: #ece9d8;
  font-family: "Noto Sans CJK SC", "Liberation Sans", sans-serif;
}
i { display: block; }
.defs { display: block; width: 0; height: 0; }

/* title */
.title {
  height: 26px;
  display: flex;
  align-items: center;
  padding-left: 2px;
  background: linear-gradient(#b5c1dc 0, #8ea9e6 2px, #7393de 12px, #7094de 18px, #80a4e8 26px);
}
.appicon { width: 16px; height: 16px; margin-right: 4px; }
.title-text {
  font: bold 13px "Liberation Mono", monospace;
  letter-spacing: .13px;
  color: #fff;
}

/* menu */
.menubar {
  height: 19px;
  display: flex;
  align-items: center;
  padding-left: 5px;
}
.docicon { width: 15px; height: 18px; margin-right: 6px; }
.menu-item {
  width: 54px;
  flex: none;
  font-size: 12px;
  line-height: 19px;
  color: #aca899;
  text-shadow: 1px 1px 0 #fff;
  white-space: nowrap;
}
.key { font: 10px "Liberation Mono", monospace; }

/* toolbar rows */
.row {
  height: 27px;
  margin-bottom: 1px;
  display: flex;
}
.row-tall { height: 28px; }
.row-last { margin-bottom: 2px; }
.bar {
  display: flex;
  align-items: center;
  flex: none;
  height: 100%;
  padding: 1px 3px 0 3px;
  margin-right: 1px;
  border-top: 1px solid #fff;
  border-bottom: 1px solid #aca899;
  border-right: 1px solid #aca899;
}
.bar-fill { flex: 1; margin-right: 0; padding-right: 0; border-right: 0; }
.grip {
  width: 7px;
  height: 23px;
  margin-right: 3px;
  flex: none;
  background: linear-gradient(90deg, #fff 0 2px, #aca899 2px 3px, #ece9d8 3px 4px, #fff 4px 6px, #aca899 6px 7px);
}
.btn {
  width: 23px;
  height: 23px;
  flex: none;
  display: flex;
  align-items: center;
  justify-content: center;
}
.ic { width: 20px; height: 20px; display: block; }
.sep {
  width: 2px;
  height: 21px;
  margin: 0 2px;
  flex: none;
  border-left: 1px solid #aca899;
  border-right: 1px solid #fff;
}
.split {
  width: 36px;
  height: 23px;
  flex: none;
  display: flex;
  align-items: center;
  padding-left: 3px;
}
.split-redo { padding-left: 2px; }
.caret {
  margin-left: 4px;
  width: 0;
  height: 0;
  border: 3px solid transparent;
  border-top: 4px solid #b5b3a8;
  border-bottom: 0;
}

/* combos */
.combo {
  height: 22px;
  flex: none;
  display: flex;
  align-items: center;
  border: 1px solid #c9c6b4;
  border-bottom-color: #fff;
  box-shadow: inset 1px 1px 0 #f8f7f0, inset -1px -1px 0 #f8f7f0;
  padding: 2px;
}
.w119 { width: 119px; }
.w120 { width: 120px; }
.w174 { width: 174px; }
.w299 { width: 299px; }
.gap-l { margin-left: 1px; margin-right: 1px; }
.combo-text {
  flex: 1;
  padding-left: 15px;
  font: 10px "Liberation Mono", monospace;
  letter-spacing: .2px;
  color: #aca899;
  text-shadow: 1px 1px 0 #fff;
  white-space: nowrap;
}
.combo-text.near { padding-left: 1px; }
.combo-text.mid { padding-left: 6px; }
.zh-combo { font: 12px "Noto Sans CJK SC", sans-serif; letter-spacing: 1px; }
.drop {
  width: 16px;
  height: 17px;
  flex: none;
  display: flex;
  align-items: center;
  justify-content: center;
  background: #eeece2;
  border: 1px solid #dedbcb;
  border-radius: 2px;
}
.chev { width: 12px; height: 8px; display: block; }
.layer-state { flex: 1; display: flex; align-items: center; padding-left: 2px; }
.st { width: 14px; height: 14px; margin-right: 2px; display: block; flex: none; }
.st-bulb { height: 18px; }
.swatch { width: 11px; height: 11px; background: #fff; border: 1px solid #000; margin: 0 3px 0 0; flex: none; }
.layer-name { font: 11px "Liberation Sans", sans-serif; color: #aca899; margin-left: 1px; }

/* workspace */
.workspace { display: flex; height: 550px; }
.docks { width: 53px; flex: none; display: flex; align-items: flex-start; }
.vbar {
  width: 26px;
  flex: none;
  border-right: 1px solid #aca899;
  border-bottom: 1px solid #aca899;
}
.vbar-draw { height: 433px; padding-left: 2px; }
.vbar-dim { height: 507px; padding-left: 1px; }
.vgrip {
  height: 9px;
  margin: 0 2px 0 1px;
  background: linear-gradient(#fff 0 1px, #aca899 1px 2px, #ece9d8 2px 3px, #fff 3px 4px, #aca899 4px 5px, transparent 5px);
}
.vbtn {
  width: 22px;
  height: 22.200px;
  display: flex;
  align-items: center;
  justify-content: center;
}
.vbar-draw .vbtn { height: 22.150px; }
.vbtn-a { font: 20px "Liberation Sans", sans-serif; color: #111; }
.hsep {
  height: 5px;
  margin: 0 2px;
  border-top: 2px solid transparent;
  background: linear-gradient(#aca899 0 1px, #fff 1px 2px, transparent 2px);
}
.viewport { flex: 1; min-width: 0; display: flex; flex-direction: column; }
.drawing { width: 935px; height: 532px; display: block; background: #000; flex: none; }
.wire { fill: none; stroke: #fff; stroke-width: 1; }
.ucs-fill { fill: #777; }
.ucs-label { font: 16px "Liberation Sans", sans-serif; fill: #ddd; }

/* layout tabs */
.tabstrip {
  height: 18px;
  display: flex;
  align-items: flex-start;
  padding-left: 1px;
  border-bottom: 3px solid #f6f5ee;
  box-shadow: inset 0 1px 0 #716f64;
}
.nav { display: flex; width: 56px; height: 14px; margin-top: 1px; flex: none; }
.nav-btn {
  width: 14px;
  height: 13px;
  flex: none;
  display: flex;
  align-items: center;
  justify-content: center;
  border-right: 1px solid #aca899;
  border-left: 1px solid #fff;
}
.nav-prev, .nav-first { width: 0; height: 0; border: 5px solid transparent; border-right: 6px solid #aca899; border-left: 0; }
.nav-next, .nav-last { width: 0; height: 0; border: 5px solid transparent; border-left: 6px solid #aca899; border-right: 0; }
.tab {
  height: 14px;
  flex: none;
  font-size: 12px;
  line-height: 13px;
  position: relative;
  white-space: nowrap;
}
.tab-active {
  width: 44px;
  margin-left: 3px;
  padding-left: 7px;
  background: #000;
  color: #fff;
  clip-path: polygon(0 0, 44px 0, 39px 100%, 5px 100%);
}
.tab-1, .tab-2 { border-bottom: 1px solid #000; color: #111; }
.tab-1 { width: 44px; padding-left: 5px; }
.tab-2 { width: 45px; padding-left: 7px; }
.tab-1::after, .tab-2::after {
  content: "";
  position: absolute;
  right: 1px;
  top: 0;
  width: 1px;
  height: 14px;
  background: #333;
  transform: rotate(15deg);
}
.hscroll { margin-left: auto; display: flex; height: 14px; flex: none; width: 49px; }
.hgrip { width: 6px; height: 13px; margin-top: 1px; border: 1px solid #c9c6b4; border-radius: 2px; background: #f0eee2; }
.harrow {
  width: 16px;
  height: 14px;
  margin-left: 1px;
  display: flex;
  align-items: center;
  justify-content: center;
  background: #bccff5;
  border: 1px solid #d8e2f6;
  border-radius: 2px;
}
.harrow svg { width: 10px; height: 10px; display: block; }
.htrack { flex: 1; height: 14px; background: linear-gradient(90deg, #f4f3ec, #fff 30%); }

/* command window */
.cmd-area { height: 134px; padding-top: 3px; display: flex; flex-direction: column; }
.cmd-head {
  height: 13px;
  flex: none;
  border-top: 1px solid #000;
  border-bottom: 2px solid #aca899;
  box-shadow: 0 1px 0 #000;
}
.cmd-body { height: 119px; flex: none; display: flex; padding-top: 1px; border-bottom: 1px solid #fff; }
.cmd-grip {
  width: 17px;
  flex: none;
  background: linear-gradient(90deg, transparent 0 7px, #fff 7px 9px, #aca899 9px 10px, transparent 10px 11px, #fff 11px 13px, #aca899 13px 14px, transparent 14px);
}
.cmd-box {
  flex: 1;
  background: #fff;
  border-left: 1px solid #000;
  font: 12px/16.200px "Liberation Mono", monospace;
  letter-spacing: .7px;
  color: #000;
}
.cmd-history { height: 99px; border-bottom: 1px solid #aca899; padding-left: 1px; }
.cmd-line { height: 16.200px; white-space: pre; }
.cmd-input { height: 19px; line-height: 19px; padding-left: 1px; white-space: pre; }
.zh { font: 14.500px/0 "Noto Sans CJK SC", sans-serif; letter-spacing: 1.300px; }

/* status */
.status {
  height: 7px;
  display: flex;
  gap: 4px;
  padding: 1px 0 0 5px;
  border-top: 1px solid #aca899;
}
.st-cell { height: 6px; border: 1px solid #c9c6b4; border-bottom: 0; flex: none; }
.st-cell.on { border-color: #222; }
.st-coords { width: 173px; }
.st-26 { width: 26px; }
.st-48 { width: 48px; }
```
